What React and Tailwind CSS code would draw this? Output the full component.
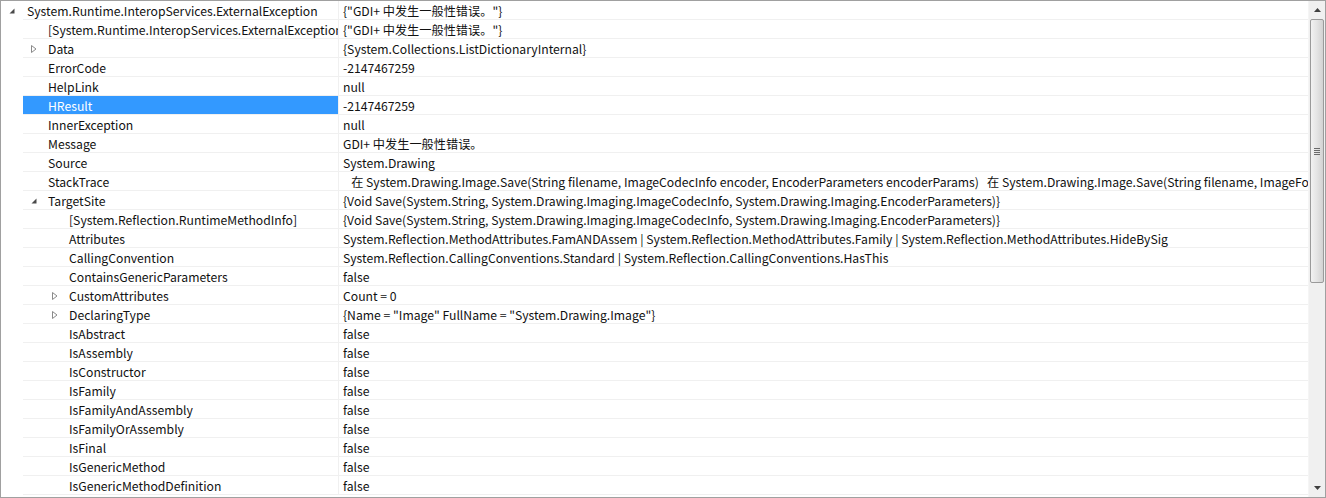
const rows = [
  { level: 0, exp: 'open', name: 'System.Runtime.InteropServices.ExternalException', value: '{"GDI+ 中发生一般性错误。"}' },
  { level: 1, name: '[System.Runtime.InteropServices.ExternalException]', value: '{"GDI+ 中发生一般性错误。"}' },
  { level: 1, exp: 'closed', name: 'Data', value: '{System.Collections.ListDictionaryInternal}' },
  { level: 1, name: 'ErrorCode', value: '-2147467259' },
  { level: 1, name: 'HelpLink', value: 'null' },
  { level: 1, name: 'HResult', value: '-2147467259', selected: true },
  { level: 1, name: 'InnerException', value: 'null' },
  { level: 1, name: 'Message', value: 'GDI+ 中发生一般性错误。' },
  { level: 1, name: 'Source', value: 'System.Drawing' },
  {
    level: 1,
    name: 'StackTrace',
    value:
      '   在 System.Drawing.Image.Save(String filename, ImageCodecInfo encoder, EncoderParameters encoderParams)   在 System.Drawing.Image.Save(String filename, ImageFormat format)   在 System.Drawing.Image.Save(String filename)',
  },
  { level: 1, exp: 'open', name: 'TargetSite', value: '{Void Save(System.String, System.Drawing.Imaging.ImageCodecInfo, System.Drawing.Imaging.EncoderParameters)}' },
  { level: 2, name: '[System.Reflection.RuntimeMethodInfo]', value: '{Void Save(System.String, System.Drawing.Imaging.ImageCodecInfo, System.Drawing.Imaging.EncoderParameters)}' },
  { level: 2, name: 'Attributes', value: 'System.Reflection.MethodAttributes.FamANDAssem | System.Reflection.MethodAttributes.Family | System.Reflection.MethodAttributes.HideBySig' },
  { level: 2, name: 'CallingConvention', value: 'System.Reflection.CallingConventions.Standard | System.Reflection.CallingConventions.HasThis' },
  { level: 2, name: 'ContainsGenericParameters', value: 'false' },
  { level: 2, exp: 'closed', name: 'CustomAttributes', value: 'Count = 0' },
  { level: 2, exp: 'closed', name: 'DeclaringType', value: '{Name = "Image" FullName = "System.Drawing.Image"}' },
  { level: 2, name: 'IsAbstract', value: 'false' },
  { level: 2, name: 'IsAssembly', value: 'false' },
  { level: 2, name: 'IsConstructor', value: 'false' },
  { level: 2, name: 'IsFamily', value: 'false' },
  { level: 2, name: 'IsFamilyAndAssembly', value: 'false' },
  { level: 2, name: 'IsFamilyOrAssembly', value: 'false' },
  { level: 2, name: 'IsFinal', value: 'false' },
  { level: 2, name: 'IsGenericMethod', value: 'false' },
  { level: 2, name: 'IsGenericMethodDefinition', value: 'false' },
];

// indent of the expander slot inside the name cell
const indent = { 1: 'pl-[4px]', 2: 'pl-[25px]' };

const Expander = ({ kind }) => {
  if (kind === 'open') {
    return (
      <svg width="8" height="8" viewBox="0 0 8 8">
        <path d="M6.5 1.5 L6.5 6.5 L1.5 6.5 Z" fill="#4a4a4a" />
      </svg>
    );
  }
  if (kind === 'closed') {
    return (
      <svg width="8" height="10" viewBox="0 0 8 10">
        <path d="M1.5 1.5 L6 5 L1.5 8.5 Z" fill="none" stroke="#8a8a8a" strokeWidth="1" />
      </svg>
    );
  }
  return null;
};

const Row = ({ row }) => {
  return (
    <div className="flex h-[19px] shrink-0">
      {/* gutter */}
      <div className="w-[22px] shrink-0 flex items-center justify-center pt-[1px]">
        {row.level === 0 && <Expander kind={row.exp} />}
      </div>

      {/* name cell */}
      <div
        className={`w-[316px] shrink-0 flex items-center overflow-hidden whitespace-nowrap border-b border-r border-[#f0f0f0] pt-[2px] ${
          row.selected ? 'bg-[#3399ff] text-white' : ''
        } ${row.level === 0 ? 'pl-[4px]' : indent[row.level]}`}
      >
        {row.level > 0 && (
          <span className="w-[14px] shrink-0 flex items-center justify-center">
            <Expander kind={row.exp} />
          </span>
        )}
        <span className={row.level > 0 ? 'ml-[7px]' : ''}>{row.name}</span>
      </div>

      {/* value cell */}
      <div className="flex-1 min-w-0 flex items-center overflow-hidden whitespace-pre border-b border-[#f0f0f0] pl-[4px] pt-[2px]">
        {row.value}
      </div>
    </div>
  );
};

const ScrollBar = () => (
  <div className="w-[17px] shrink-0 bg-[#f0f0f0] border-l border-[#f5f5f5] flex flex-col">
    <div className="h-[18px] flex items-center justify-center">
      <svg width="7" height="4" viewBox="0 0 7 4">
        <path d="M3.5 0 L7 4 L0 4 Z" fill="#404040" />
      </svg>
    </div>
    <div className="mx-[1px] h-[264px] rounded-[2px] border border-[#9a9a9a] bg-gradient-to-r from-[#f2f2f2] via-[#e4e4e4] to-[#d2d2d2] flex items-center justify-center">
      <div className="flex flex-col gap-[1px]">
        <div className="w-[6px] h-[1px] bg-[#6a6a6a]" />
        <div className="w-[6px] h-[1px] bg-[#6a6a6a]" />
        <div className="w-[6px] h-[1px] bg-[#6a6a6a]" />
        <div className="w-[6px] h-[1px] bg-[#6a6a6a]" />
      </div>
    </div>
    <div className="flex-1" />
    <div className="h-[18px] flex items-center justify-center">
      <svg width="7" height="4" viewBox="0 0 7 4">
        <path d="M0 0 L7 0 L3.5 4 Z" fill="#404040" />
      </svg>
    </div>
  </div>
);

export default function App() {
  return (
    <div
      className="w-[1326px] h-[498px] border border-[#a0a0a0] bg-white flex overflow-hidden text-[12.2px] text-[#111111]"
      style={{ fontFamily: '"Noto Sans CJK SC", "Noto Sans", sans-serif' }}
    >
      <div className="flex-1 min-w-0 flex flex-col overflow-hidden">
        {rows.map((row, i) => (
          <Row key={i} row={row} />
        ))}
      </div>
      <ScrollBar />
    </div>
  );
}
